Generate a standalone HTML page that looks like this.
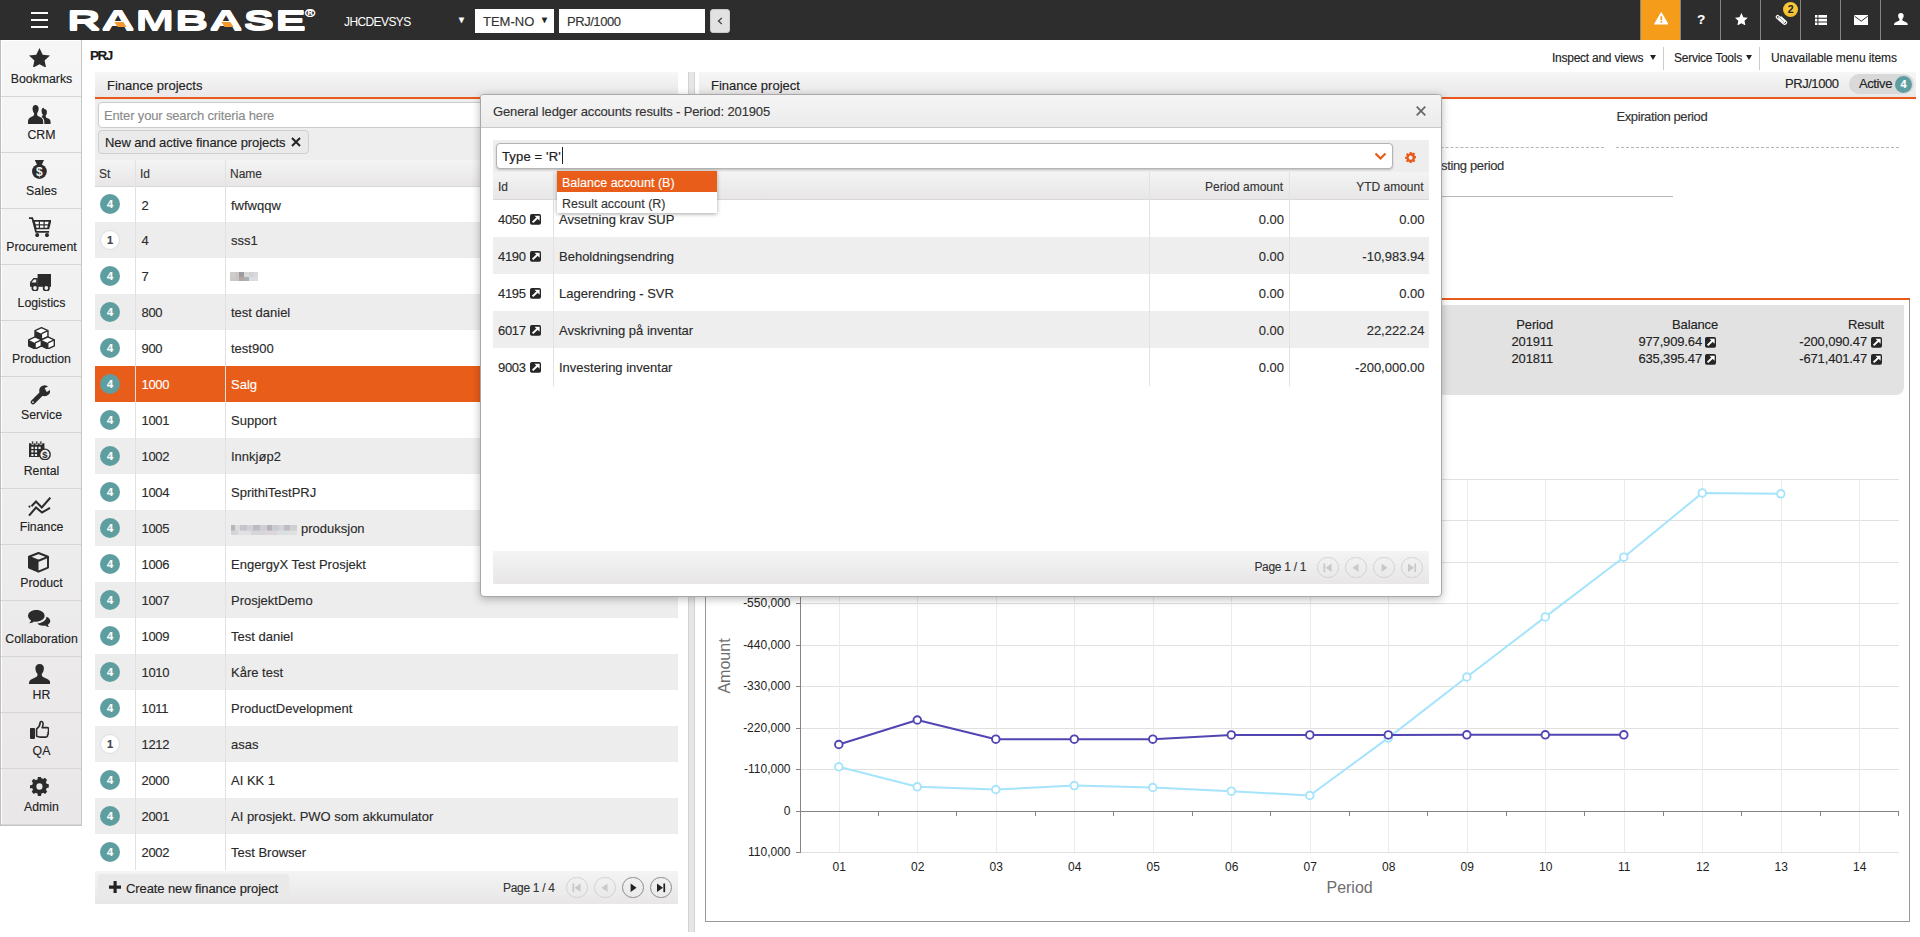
<!DOCTYPE html>
<html lang="en"><head><meta charset="utf-8"><title>RamBase - PRJ</title>
<style>
*{box-sizing:border-box;margin:0;padding:0}
html,body{width:1920px;height:937px;overflow:hidden;background:#fff}
body{font-family:"Liberation Sans",sans-serif;font-size:13px;color:#2a2a2a;position:relative;-webkit-text-stroke:.13px currentColor}
.abs{position:absolute}
svg text{-webkit-text-stroke:0}
#top{left:0;top:0;width:1920px;height:40px;background:#2d2d2d}
#top .t{position:absolute;color:#fff}
.tbtn{position:absolute;top:0;width:40px;height:40px;border-left:1px solid #8a8282}
#side{left:0;top:40px;width:82px;height:786px;background:linear-gradient(#f6f6f6,#e9e7e7);border-left:1px solid #bdbdbd;border-right:1px solid #c6c6c6;border-bottom:1px solid #c4c4c4;box-shadow:inset 1px 1px 0 #fff}
.si{position:absolute;left:0;width:80px;height:57px;border-bottom:1px solid #d6d6d6;text-align:center}
.si svg{position:absolute;left:50%;transform:translateX(-50%)}
.si span{position:absolute;left:-3px;width:87px;top:32px;font-size:12.3px;color:#222;text-align:center;line-height:14px}
.phead{position:absolute;height:27px;background:linear-gradient(#f7f7f7,#e9e7e7);border-bottom:2px solid #e8591a;font-size:13px;line-height:27px;color:#222;padding-left:12px}
.lrow{position:absolute;left:95px;width:583px;height:36px;line-height:36px}
.lrow.alt{background:#ededed}
.lrow.sel{background:#e95d1a;color:#fff}
.lrow b{position:absolute;left:5px;top:8px;width:20px;height:20px;border-radius:10px;background:#5f9ea0;color:#fff;font-size:11px;line-height:20px;text-align:center;font-weight:bold}
.lrow b.one{background:#fff;color:#444;border:1px solid #ddd;line-height:18px}
.lrow i{position:absolute;font-style:normal;top:1px}
.lrow .id{left:46.500px;letter-spacing:-.3px}
.lrow .nm{left:136px}
.vline{position:absolute;width:1px;background:#e1e1e1}
.pg{position:absolute;width:21.600px;height:21.600px;border-radius:11px;border:1px solid #8c8c8c}
.pg.dis{border-color:#d2d2d2}
.mrow{position:absolute;left:493px;width:936px;height:37px;line-height:37px}
.mrow.alt{background:#eeeeee}
.mrow i{position:absolute;font-style:normal;top:1px}
.ext{position:absolute;width:11px;height:11px;background:#222;border-radius:2px}
.ext svg{position:absolute;left:0;top:0}
</style></head><body>

<div id="top" class="abs">
<div class="abs" style="left:31px;top:12px;width:17px;height:2px;background:#fff;box-shadow:0 7px 0 #fff,0 14px 0 #fff"></div>
<div class="t" id="logo" style="left:67px;top:6px;font-size:28px;font-weight:bold;line-height:30px;letter-spacing:.5px;transform-origin:0 50%;transform:scaleX(1.655);white-space:nowrap;text-shadow:0 .8px 0 #fff,0 -.8px 0 #fff">RAMBASE</div>
<div class="t" style="left:305px;top:7.5px;font-size:11px;line-height:10px;transform-origin:0 50%;transform:scaleX(1.25);-webkit-text-stroke:.4px #fff">®</div>
<div class="abs" style="left:115.5px;top:22px;width:8.5px;height:5px;background:#f39a2e;transform:skewX(33deg)"></div>
<div class="abs" style="left:222.5px;top:22px;width:8.5px;height:5px;background:#f39a2e;transform:skewX(33deg)"></div>
<div class="t" style="left:344px;top:13.500px;font-size:12px;line-height:17px;letter-spacing:-.6px;-webkit-text-stroke:0">JHCDEVSYS</div>
<div class="t" style="left:457px;top:14px;font-size:9px;line-height:12px">▼</div>
<div class="abs" style="left:475px;top:9px;width:79px;height:24px;background:#fff"></div>
<div class="abs" style="left:483px;top:13px;font-size:13px;line-height:17px;color:#333">TEM-NO</div>
<div class="abs" style="left:540px;top:14px;font-size:9px;line-height:12px;color:#222">▼</div>
<div class="abs" style="left:559px;top:9px;width:146px;height:24px;background:#fff"></div>
<div class="abs" style="left:567px;top:13px;font-size:13px;line-height:17px;color:#333;letter-spacing:-.45px">PRJ/1000</div>
<div class="abs" style="left:710px;top:9px;width:20px;height:24px;background:#e2e2e2;border-radius:3px;border:1px solid #ccc"></div>
<svg class="abs" style="left:717px;top:17px" width="6" height="8" viewBox="0 0 6 8"><path d="M4.800 1L1.500 4l3.300 3" fill="none" stroke="#444" stroke-width="1.300"/></svg>
<div class="tbtn" style="left:1640px;background:#f59c1a"></div>
<div class="tbtn" style="left:1680px"></div>
<div class="tbtn" style="left:1720px"></div>
<div class="tbtn" style="left:1760px"></div>
<div class="tbtn" style="left:1800px"></div>
<div class="tbtn" style="left:1840px"></div>
<div class="tbtn" style="left:1880px"></div>
<svg class="abs" style="left:1653.5px;top:12px" width="14.5" height="13" viewBox="0 0 16 14"><path d="M8 .8L15.200 13H.8z" fill="#fff" stroke="#fff" stroke-width="1.200" stroke-linejoin="round"/><rect x="7.100" y="4.500" width="1.900" height="4.300" fill="#f59c1a"/><rect x="7.100" y="9.800" width="1.900" height="1.800" fill="#f59c1a"/></svg>
<div class="t" style="left:1697px;top:11px;font-size:13.5px;font-weight:bold;line-height:18px">?</div>
<svg class="abs" style="left:1735px;top:12.800px" width="12.800" height="12.500" viewBox="0.5 0.5 19 18.500" preserveAspectRatio="none"><path d="M10 .5l2.900 6.300 6.600.7-4.900 4.600 1.400 6.900L10 15.600 4 19l1.400-6.900L.5 7.500l6.600-.7z" fill="#fff"/></svg>
<svg class="abs" style="left:1775px;top:14px" width="12.500" height="11.500" viewBox="0 0 12.500 11.500"><path d="M3.300 3.600l5.200 4.500c.8.700 1.800-.4 1-1.100L3.600 1.900C2.200.7.300 2.700 1.800 4.100l6.600 5.700c1.900 1.600 4.300-1 2.500-2.700L6.200 3" fill="none" stroke="#fff" stroke-width="1.200" stroke-linecap="round" stroke-linejoin="round"/></svg>
<div class="abs" style="left:1783px;top:2px;width:15.400px;height:15.400px;border-radius:8px;background:radial-gradient(circle at 50% 35%,#fbd24a,#f2b61c);color:#222;font-size:10.500px;font-weight:bold;line-height:15px;text-align:center">2</div>
<svg class="abs" style="left:1815px;top:14.800px" width="12.400" height="10.200" viewBox="0 0 12.400 10.200"><g fill="#fff"><rect x="0" y="0" width="2.400" height="2.700"/><rect x="3.400" y="0" width="9" height="2.700"/><rect x="0" y="3.800" width="2.400" height="2.700"/><rect x="3.400" y="3.800" width="9" height="2.700"/><rect x="0" y="7.500" width="2.400" height="2.700"/><rect x="3.400" y="7.500" width="9" height="2.700"/></g></svg>
<svg class="abs" style="left:1853.800px;top:14.800px" width="14.400" height="10.200" viewBox="0 0 14.400 10.200"><rect width="14.400" height="10.200" rx=".8" fill="#fff"/><path d="M.6 1.200l6.600 5 6.600-5" fill="none" stroke="#2d2d2d" stroke-width="1"/></svg>
<svg class="abs" style="left:1894.300px;top:12.800px" width="13.800" height="12.200" viewBox="2.200 0.800 17.600 18.700" preserveAspectRatio="none"><path d="M11 .8C8.600.8 7.300 2.800 7.500 5.300c.2 2.500 1 3.800 1.700 4.800.3 2-.7 2.800-2.700 3.700-2.600 1.200-4.300 2-4.300 5.200v.5h17.600V19c0-3.200-1.700-4-4.300-5.200-2-.9-3-1.700-2.700-3.700.7-1 1.500-2.300 1.700-4.800C14.700 2.800 13.400.8 11 .8z" fill="#fff"/></svg>
</div>
<div id="side" class="abs">
<div class="si" style="top:0px"><span>Bookmarks</span></div>
<div class="si" style="top:56px"><span>CRM</span></div>
<div class="si" style="top:112px"><span>Sales</span></div>
<div class="si" style="top:168px"><span>Procurement</span></div>
<div class="si" style="top:224px"><span>Logistics</span></div>
<div class="si" style="top:280px"><span>Production</span></div>
<div class="si" style="top:336px"><span>Service</span></div>
<div class="si" style="top:392px"><span>Rental</span></div>
<div class="si" style="top:448px"><span>Finance</span></div>
<div class="si" style="top:504px"><span>Product</span></div>
<div class="si" style="top:560px"><span>Collaboration</span></div>
<div class="si" style="top:616px"><span>HR</span></div>
<div class="si" style="top:672px"><span>QA</span></div>
<div class="si" style="top:728px"><span>Admin</span></div>
</div>
<svg class="abs" style="left:29px;top:47.5px" width="21.0" height="19.8" viewBox="0.5 0.5 19 18.5" preserveAspectRatio="none"><path d="M10 .5l2.900 6.300 6.600.7-4.900 4.600 1.400 6.900L10 15.600 4 19l1.400-6.900L.5 7.500l6.600-.7z" fill="#2b2b2b"/></svg>
<svg class="abs" style="left:28px;top:104.6px" width="22.6" height="19.4" viewBox="0.6 1 20.8 17" preserveAspectRatio="none"><path d="M7.500 1C5.600 1 4.600 2.600 4.800 4.600 5 6.600 5.600 7.600 6.200 8.400 6.400 10 5.600 10.600 4 11.400 2 12.300.6 13 .6 15.500V18h14v-2.500c0-2.500-1.400-3.200-3.400-4.100-1.600-.8-2.400-1.400-2.200-3 .6-.8 1.200-1.800 1.400-3.800C10.600 2.600 9.400 1 7.500 1z" fill="#2b2b2b"/><path d="M15.3 3.500c-1.500 0-2.400 1.300-2.200 2.900.2 1.600.6 2.400 1.100 3-.1 1.200-.5 1.700-1.300 2.100 1.700.9 2.700 1.900 2.700 4V18h5.800v-2c0-2-1.100-2.600-2.700-3.300-1.300-.6-1.900-1.100-1.800-2.400.5-.6 1-1.400 1.100-3 .2-1.500-.8-2.800-2.700-2.800z" fill="#2b2b2b"/></svg>
<svg class="abs" style="left:32.2px;top:160.3px" width="14.8" height="18.9" viewBox="0 0 14.8 19" preserveAspectRatio="none"><path d="M2.800 0h9.200l-2.300 5h-4.600z" fill="#2b2b2b"/><circle cx="7.400" cy="11.600" r="7.400" fill="#2b2b2b"/><text x="7.400" y="16" font-family="Liberation Sans,sans-serif" font-size="12" font-weight="bold" fill="#f4f4f4" text-anchor="middle">$</text></svg>
<svg class="abs" style="left:28.7px;top:216.6px" width="22.5" height="20.1" viewBox="0 0 22.5 20" preserveAspectRatio="none"><path d="M0 .3h3.900l.9 2.700h17.700l-2.300 9.200H7.300l.4 1.700h12.400v1.700H6.300L2.600 2H0z" fill="#2b2b2b"/><path d="M6 4.700l.6 2.500h3.200V4.700zm5 0v2.500h3.500V4.700zm4.700 0v2.500h3.300l.6-2.500zM6.900 8.400l.6 2.300h2.300V8.400zm4.100 0v2.300h3.500V8.400zm4.700 0v2.300h2.500l.6-2.300z" fill="#fff"/><circle cx="8.200" cy="18" r="2" fill="#2b2b2b"/><circle cx="18" cy="18" r="2" fill="#2b2b2b"/></svg>
<svg class="abs" style="left:29.6px;top:273.8px" width="21.6" height="17.4" viewBox="0 0 21.6 17" preserveAspectRatio="none"><path d="M7.600 0h14v12.500h-14z" fill="#2b2b2b"/><path d="M3.400 4h4.400v8.500H0V8z" fill="#2b2b2b"/><path d="M3.900 5.300h2.300v3H1.500z" fill="#f2f1f1"/><circle cx="5" cy="13.700" r="2.700" fill="#f2f1f1" stroke="#2b2b2b" stroke-width="1.700"/><circle cx="16.300" cy="13.700" r="2.700" fill="#f2f1f1" stroke="#2b2b2b" stroke-width="1.700"/></svg>
<svg class="abs" style="left:28.4px;top:326.6px" width="27.0" height="22.6" viewBox="-0.7 -0.7 28.4 23.7" preserveAspectRatio="none"><path d="M13.50 0.00L20.30 3.15L20.30 9.45L13.50 12.60L6.70 9.45L6.70 3.15Z" fill="#fff" stroke="#2b2b2b" stroke-width="1.5" stroke-linejoin="round"/><path d="M6.70 3.15L13.50 6.30L13.50 12.60L6.70 9.45Z" fill="#2b2b2b"/><path d="M13.50 6.30L20.30 3.15M13.50 6.30L13.50 12.60" fill="none" stroke="#2b2b2b" stroke-width="1.3"/><path d="M6.80 9.70L13.60 12.85L13.60 19.15L6.80 22.30L0.00 19.15L0.00 12.85Z" fill="#fff" stroke="#2b2b2b" stroke-width="1.5" stroke-linejoin="round"/><path d="M0.00 12.85L6.80 16.00L6.80 22.30L0.00 19.15Z" fill="#2b2b2b"/><path d="M6.80 16.00L13.60 12.85M6.80 16.00L6.80 22.30" fill="none" stroke="#2b2b2b" stroke-width="1.3"/><path d="M20.20 9.70L27.00 12.85L27.00 19.15L20.20 22.30L13.40 19.15L13.40 12.85Z" fill="#fff" stroke="#2b2b2b" stroke-width="1.5" stroke-linejoin="round"/><path d="M13.40 12.85L20.20 16.00L20.20 22.30L13.40 19.15Z" fill="#2b2b2b"/><path d="M20.20 16.00L27.00 12.85M20.20 16.00L20.20 22.30" fill="none" stroke="#2b2b2b" stroke-width="1.3"/></svg>
<svg class="abs" style="left:29.6px;top:385px" width="20.7" height="19.7" viewBox="0 0 20.7 19.700" preserveAspectRatio="none"><path d="M3 17.100L12.300 7.800" stroke="#2b2b2b" stroke-width="4.500" stroke-linecap="round"/><circle cx="14.700" cy="5.700" r="5.500" fill="#2b2b2b"/><path d="M15.700 5.100L23 .9" stroke="#f0efef" stroke-width="4.300"/><circle cx="3" cy="17.100" r=".9" fill="#f0efef"/></svg>
<svg class="abs" style="left:28.7px;top:440.6px" width="21.9" height="19.4" viewBox="0 0 22 19.500" preserveAspectRatio="none"><path d="M0 2.200h15.500v7.300c-3 .6-4.800 3-4.800 6V16H0z" fill="#2b2b2b"/><path d="M2.700 0h2v3.400h-2zM6.800 0h2v3.400h-2zM10.900 0h2v3.400h-2z" fill="#2b2b2b" stroke="#efeeee" stroke-width=".7"/><path d="M2.300 5.800h2.200V8H2.300zm3.600 0h2.200V8H5.900zm3.600 0h2.200V8H9.500zM2.300 9.400h2.200v2.200H2.300zm3.600 0h2.200v2.200H5.900zM2.300 13h2.200v2H2.300zm3.600 0h2.200v2H5.900z" fill="#efeeee"/><circle cx="16" cy="13.500" r="5.300" fill="#efeeee" stroke="#2b2b2b" stroke-width="1.400"/><text x="16" y="17" font-family="Liberation Sans,sans-serif" font-size="9.500" font-weight="bold" fill="#2b2b2b" text-anchor="middle">$</text></svg>
<svg class="abs" style="left:27.8px;top:497px" width="23.4" height="19.4" viewBox="0 0 23.400 19.400" preserveAspectRatio="none"><path d="M3.500 9.200L8 4.500l5.800 6L22.300.7" fill="none" stroke="#2b2b2b" stroke-width="2"/><circle cx="1.500" cy="9.600" r="1.100" fill="#2b2b2b"/><path d="M1 18.700L8 10.500l6 5 8-4.500" fill="none" stroke="#2b2b2b" stroke-width="2"/></svg>
<svg class="abs" style="left:28.4px;top:552px" width="21.0" height="20.7" viewBox="0 0 21 20.700" preserveAspectRatio="none"><path d="M10.500 1L20 4.800v10.800l-9.500 4.100L1 15.600V4.800z" fill="#edecec" stroke="#2b2b2b" stroke-width="2" stroke-linejoin="round"/><path d="M10.500 8.800v10.900L1 15.600V4.800z" fill="#2b2b2b"/><path d="M1 4.800l9.500 4 9.500-4" fill="none" stroke="#2b2b2b" stroke-width="2" stroke-linejoin="round"/></svg>
<svg class="abs" style="left:28.4px;top:610.4px" width="22.8" height="17.1" viewBox="0.8 1 22.500 18.200" preserveAspectRatio="none"><path d="M9 1C4.300 1 .8 3.700.8 7.200c0 2 1.200 3.700 3 4.800-.2 1.200-.9 2.300-1.800 3.100 1.900-.1 3.600-.8 4.800-1.900.7.100 1.400.2 2.200.2 4.700 0 8.200-2.800 8.200-6.200S13.700 1 9 1z" fill="#2b2b2b"/><path d="M19 8.300c0 3.700-3.800 6.800-9 7.100 1.300 1.500 3.500 2.400 6 2.400.6 0 1.200-.1 1.800-.2 1 .9 2.400 1.500 4 1.600-.8-.7-1.300-1.600-1.500-2.600 1.500-.9 2.500-2.300 2.500-3.900 0-1.800-1.500-3.500-3.800-4.400z" fill="#2b2b2b"/></svg>
<svg class="abs" style="left:28.7px;top:664px" width="21.3" height="20.0" viewBox="2.2 0.8 17.600 18.700" preserveAspectRatio="none"><path d="M11 .8C8.600.8 7.300 2.800 7.500 5.300c.2 2.500 1 3.800 1.700 4.800.3 2-.7 2.800-2.700 3.700-2.600 1.200-4.300 2-4.300 5.200v.5h17.600V19c0-3.200-1.700-4-4.300-5.200-2-.9-3-1.700-2.700-3.700.7-1 1.500-2.300 1.700-4.800C14.700 2.800 13.400.8 11 .8z" fill="#2b2b2b"/></svg>
<svg class="abs" style="left:29.6px;top:719.5px" width="19.8" height="20.9" viewBox="0 0 19.800 21" preserveAspectRatio="none"><path d="M6.600 9c2-1.300 3.400-3.600 3.600-6.600.1-1.400 2.700-1.300 2.900 1.200.1 1.400-.4 2.800-.9 4.100h5c1.500 0 2 1.500 1.100 2.400.8.800.6 1.900-.3 2.500.6.900.3 1.900-.6 2.400.5 1.100-.2 2.200-1.500 2.200h-5.400c-1.400 0-2.800-.7-3.900-1z" fill="#ebe9e9" stroke="#2b2b2b" stroke-width="1.600" stroke-linejoin="round"/><path d="M.8 8.800h3.400v9.400H.8z" fill="#2b2b2b" stroke="#2b2b2b" stroke-width="1.600" stroke-linejoin="round"/></svg>
<svg class="abs" style="left:30px;top:777px" width="18.8" height="19.0" viewBox="-1.500 .6 20.900 20" preserveAspectRatio="none"><path d="M19.4 11.7V8.3l-2.5-.5c-.2-.7-.5-1.300-.8-1.900l1.400-2.100-2.400-2.400-2.100 1.400c-.6-.3-1.200-.6-1.900-.8L10.700.6H7.300l-.5 2.500c-.7.2-1.300.5-1.900.8L2.800 2.500.4 4.900 1.800 7c-.3.600-.6 1.200-.8 1.900l-2.500.5v3.400L1 12.200c.2.700.5 1.300.8 1.900L.4 16.200l2.400 2.400 2.100-1.400c.6.3 1.200.6 1.900.8l.5 2.500h3.400l.5-2.500c.7-.2 1.300-.5 1.900-.8l2.100 1.400 2.400-2.400-1.400-2.100c.3-.6.600-1.200.8-1.900z" fill="#2b2b2b"/><circle cx="9" cy="10.600" r="3.400" fill="#eae8e8"/></svg>
<div class="abs" style="left:90px;top:46.5px;font-size:13.5px;font-weight:bold;line-height:18px;color:#1a1a1a;letter-spacing:-1.5px">PRJ</div>
<div class="abs" style="left:1552px;top:51px;font-size:12px;line-height:15px;color:#222;white-space:nowrap;letter-spacing:-.25px">Inspect and views</div>
<div class="abs" style="left:1649.500px;top:55px;width:0;height:0;border-left:3.700px solid transparent;border-right:3.700px solid transparent;border-top:5.500px solid #222"></div>
<div class="abs" style="left:1663px;top:47px;width:1px;height:23px;background:#ccc"></div>
<div class="abs" style="left:1674px;top:51px;font-size:12px;line-height:15px;color:#222;white-space:nowrap;letter-spacing:-.25px">Service Tools</div>
<div class="abs" style="left:1746px;top:55px;width:0;height:0;border-left:3.700px solid transparent;border-right:3.700px solid transparent;border-top:5.500px solid #222"></div>
<div class="abs" style="left:1759px;top:47px;width:1px;height:23px;background:#ccc"></div>
<div class="abs" style="left:1771px;top:51px;font-size:12px;line-height:15px;color:#222;white-space:nowrap;letter-spacing:-.1px">Unavailable menu items</div>
<div class="phead" style="left:95px;top:72px;width:583px">Finance projects</div>
<div class="abs" style="left:95px;top:99px;width:583px;height:61px;background:#eeeeee"></div>
<div class="abs" style="left:98px;top:102px;width:577px;height:26px;background:#fff;border:1px solid #ccc;border-radius:4px;padding-left:5px;line-height:26px;color:#8a8a8a;letter-spacing:-.15px">Enter your search criteria here</div>
<div class="abs" style="left:98px;top:130px;width:211px;height:24px;background:#eaeaea;border:1px solid #cfcfcf;border-radius:4px;padding-left:6px;line-height:24px;color:#222;letter-spacing:-.1px;white-space:nowrap">New and active finance projects</div>
<svg class="abs" style="left:291px;top:137px" width="10" height="10" viewBox="0 0 10 10"><path d="M1 1l8 8M9 1l-8 8" stroke="#222" stroke-width="2"/></svg>
<div class="abs" style="left:95px;top:160px;width:583px;height:27px;background:linear-gradient(#f4f4f4,#e8e6e6);border-bottom:1px solid #d8d8d8"></div>
<div class="abs" style="left:99px;top:167px;font-size:12px;line-height:15px;color:#333">St</div>
<div class="abs" style="left:140px;top:167px;font-size:12px;line-height:15px;color:#333">Id</div>
<div class="abs" style="left:230px;top:167px;font-size:12px;line-height:15px;color:#333">Name</div>
<div class="lrow" style="top:187px;height:35px"><b style="top:7px">4</b><i class="id">2</i><i class="nm">fwfwqqw</i></div>
<div class="lrow alt" style="top:222px;height:36px"><b class="one">1</b><i class="id">4</i><i class="nm">sss1</i></div>
<div class="lrow" style="top:258px;height:36px"><b>4</b><i class="id">7</i><i class="nm" style="left:135px;top:14px;width:28px;height:9px;background:linear-gradient(90deg,#d0cccc 0 17%,#cbc7c7 17% 33%,#9b9ba1 33% 50%,#dbd9d5 50% 67%,#d2d2d8 67% 84%,#d9d9d9 84%) top/100% 56% no-repeat,linear-gradient(90deg,#cdc9c9 0 17%,#c9c5c1 17% 33%,#b1a5a5 33% 50%,#abafb1 50% 67%,#d5dde5 67% 84%,#dddddb 84%) bottom/100% 50% no-repeat"></i></div>
<div class="lrow alt" style="top:294px;height:36px"><b>4</b><i class="id">800</i><i class="nm">test daniel</i></div>
<div class="lrow" style="top:330px;height:36px"><b>4</b><i class="id">900</i><i class="nm">test900</i></div>
<div class="lrow sel" style="top:366px;height:36px"><b>4</b><i class="id">1000</i><i class="nm">Salg</i></div>
<div class="lrow" style="top:402px;height:36px"><b>4</b><i class="id">1001</i><i class="nm">Support</i></div>
<div class="lrow alt" style="top:438px;height:36px"><b>4</b><i class="id">1002</i><i class="nm">Innkjøp2</i></div>
<div class="lrow" style="top:474px;height:36px"><b>4</b><i class="id">1004</i><i class="nm">SprithiTestPRJ</i></div>
<div class="lrow alt" style="top:510px;height:36px"><b>4</b><i class="id">1005</i><i class="nm" style="top:15px;width:66px;height:10px;background:linear-gradient(90deg,#b9b5bb 0 6%,#dcdcde 6% 14%,#c4c4ca 14% 24%,#d2d0d4 24% 34%,#bcbcc4 34% 44%,#cfcfd3 44% 54%,#b8b0bc 54% 62%,#c6ccd2 62% 72%,#d4d4d8 72% 80%,#bdbdc3 80% 90%,#d0d0d4 90%) top/100% 56% no-repeat,linear-gradient(90deg,#d6d4d6 0 10%,#e2e0e2 10% 30%,#d6d6da 30% 50%,#dcd6dc 50% 70%,#dadfe3 70% 85%,#e0e0e0 85%) bottom/100% 50% no-repeat"></i><i class="nm" style="left:206px">produksjon</i></div>
<div class="lrow" style="top:546px;height:36px"><b>4</b><i class="id">1006</i><i class="nm">EngergyX Test Prosjekt</i></div>
<div class="lrow alt" style="top:582px;height:36px"><b>4</b><i class="id">1007</i><i class="nm">ProsjektDemo</i></div>
<div class="lrow" style="top:618px;height:36px"><b>4</b><i class="id">1009</i><i class="nm">Test daniel</i></div>
<div class="lrow alt" style="top:654px;height:36px"><b>4</b><i class="id">1010</i><i class="nm">Kåre test</i></div>
<div class="lrow" style="top:690px;height:36px"><b>4</b><i class="id">1011</i><i class="nm">ProductDevelopment</i></div>
<div class="lrow alt" style="top:726px;height:36px"><b class="one">1</b><i class="id">1212</i><i class="nm">asas</i></div>
<div class="lrow" style="top:762px;height:36px"><b>4</b><i class="id">2000</i><i class="nm">AI KK 1</i></div>
<div class="lrow alt" style="top:798px;height:36px"><b>4</b><i class="id">2001</i><i class="nm">AI prosjekt. PWO som akkumulator</i></div>
<div class="lrow" style="top:834px;height:36px"><b>4</b><i class="id">2002</i><i class="nm">Test Browser</i></div>
<div class="vline" style="left:135px;top:160px;height:710px"></div>
<div class="vline" style="left:225px;top:160px;height:710px"></div>
<div class="abs" style="left:95px;top:871px;width:583px;height:33px;background:linear-gradient(#f4f4f4,#e8e6e6)"></div>
<div class="abs" style="left:98px;top:874px;width:191px;height:27px;background:#e9e9e9;border-radius:3px"></div>
<svg class="abs" style="left:108.800px;top:881.300px" width="12.200" height="12.200" viewBox="0 0 12 12"><path d="M6 0v12M0 6h12" stroke="#222" stroke-width="3.100"/></svg>
<div class="abs" style="left:126px;top:881px;line-height:16px;color:#222;letter-spacing:-.1px;white-space:nowrap">Create new finance project</div>
<div class="abs" style="left:503px;top:880.500px;font-size:12px;line-height:15px;color:#333;white-space:nowrap;letter-spacing:-.3px">Page 1 / 4</div>
<div class="pg dis" style="left:566.2px;top:876.8px"></div>
<svg class="abs" style="left:566.2px;top:876.8px" width="21.600" height="21.600" viewBox="0 0 20 20"><rect x="6" y="6" width="1.6" height="8" fill="#c9c9c9"/><path d="M13.5 6v8L8 10z" fill="#c9c9c9"/></svg>
<div class="pg dis" style="left:594.2px;top:876.8px"></div>
<svg class="abs" style="left:594.2px;top:876.8px" width="21.600" height="21.600" viewBox="0 0 20 20"><path d="M12.5 6v8L7 10z" fill="#c9c9c9"/></svg>
<div class="pg" style="left:622.2px;top:876.8px"></div>
<svg class="abs" style="left:622.2px;top:876.8px" width="21.600" height="21.600" viewBox="0 0 20 20"><path d="M8 6v8l5.5-4z" fill="#222"/></svg>
<div class="pg" style="left:650.2px;top:876.8px"></div>
<svg class="abs" style="left:650.2px;top:876.8px" width="21.600" height="21.600" viewBox="0 0 20 20"><rect x="12.4" y="6" width="1.6" height="8" fill="#222"/><path d="M6.5 6v8L12 10z" fill="#222"/></svg>
<div class="abs" style="left:688px;top:72px;width:7px;height:860px;background:#e6e6e6;border-left:1px solid #d2d2d2;border-right:1px solid #d2d2d2"></div>
<div class="phead" style="left:699px;top:72px;width:1217px">Finance project</div>
<div class="abs" style="left:1785px;top:76px;line-height:16px;color:#222;letter-spacing:-.45px">PRJ/1000</div>
<div class="abs" style="left:1849px;top:74px;width:65px;height:20px;border-radius:10px;background:#d9d9d9"></div>
<div class="abs" style="left:1859px;top:76px;line-height:16px;color:#222;letter-spacing:-.4px">Active</div>
<div class="abs" style="left:1895px;top:76px;width:17px;height:17px;border-radius:9px;background:#5f9ea0;color:#fff;font-size:11px;font-weight:bold;line-height:17px;text-align:center">4</div>
<div class="abs" style="left:1616.500px;top:109px;line-height:16px;color:#333;letter-spacing:-.4px;white-space:nowrap">Expiration period</div>
<div class="abs" style="left:1300px;top:147px;width:304px;height:0;border-top:1px dashed #b5b5b5"></div>
<div class="abs" style="left:1616px;top:147px;width:283px;height:0;border-top:1px dashed #b5b5b5"></div>
<div class="abs" style="left:1400px;top:158px;width:104px;text-align:right;line-height:15px;color:#333;letter-spacing:-.35px;white-space:nowrap">Posting period</div>
<div class="abs" style="left:1300px;top:196px;width:373px;height:1px;background:#b9b9b9"></div>
<div class="abs" style="left:706px;top:298px;width:1204px;height:2px;background:#e8591a"></div>
<div class="abs" style="left:705px;top:300px;width:1205px;height:622px;border:1px solid #999;border-top:none"></div>
<div class="abs" style="left:712px;top:305px;width:1192px;height:90px;background:#e2e2e2;border-radius:0 0 8px 8px"></div>
<div class="abs" style="left:1433px;top:317px;width:120px;text-align:right;line-height:16px;color:#222;letter-spacing:-.15px;white-space:nowrap">Period</div>
<div class="abs" style="left:1433px;top:334px;width:120px;text-align:right;line-height:16px;color:#222;letter-spacing:-.15px;white-space:nowrap">201911</div>
<div class="abs" style="left:1433px;top:351px;width:120px;text-align:right;line-height:16px;color:#222;letter-spacing:-.15px;white-space:nowrap">201811</div>
<div class="abs" style="left:1598px;top:317px;width:120px;text-align:right;line-height:16px;color:#222;letter-spacing:-.15px;white-space:nowrap">Balance</div>
<div class="abs" style="left:1582px;top:334px;width:120px;text-align:right;line-height:16px;color:#222;letter-spacing:-.15px;white-space:nowrap">977,909.64</div>
<div class="abs" style="left:1582px;top:351px;width:120px;text-align:right;line-height:16px;color:#222;letter-spacing:-.15px;white-space:nowrap">635,395.47</div>
<div class="abs" style="left:1764px;top:317px;width:120px;text-align:right;line-height:16px;color:#222;letter-spacing:-.15px;white-space:nowrap">Result</div>
<div class="abs" style="left:1747px;top:334px;width:120px;text-align:right;line-height:16px;color:#222;letter-spacing:-.15px;white-space:nowrap">-200,090.47</div>
<div class="abs" style="left:1747px;top:351px;width:120px;text-align:right;line-height:16px;color:#222;letter-spacing:-.15px;white-space:nowrap">-671,401.47</div>
<svg class="abs" style="left:1705px;top:337px" width="11" height="11" viewBox="0 0 11 11"><rect width="11" height="10.8" rx="1.8" fill="#262626"/><path d="M4.500 1.800H9.600V6.800Z" fill="#fff"/><path d="M2.600 8.400L7.400 3.800" stroke="#fff" stroke-width="2"/></svg>
<svg class="abs" style="left:1705px;top:354px" width="11" height="11" viewBox="0 0 11 11"><rect width="11" height="10.8" rx="1.8" fill="#262626"/><path d="M4.500 1.800H9.600V6.800Z" fill="#fff"/><path d="M2.600 8.400L7.400 3.800" stroke="#fff" stroke-width="2"/></svg>
<svg class="abs" style="left:1871px;top:337px" width="11" height="11" viewBox="0 0 11 11"><rect width="11" height="10.8" rx="1.8" fill="#262626"/><path d="M4.500 1.800H9.600V6.800Z" fill="#fff"/><path d="M2.600 8.400L7.400 3.800" stroke="#fff" stroke-width="2"/></svg>
<svg class="abs" style="left:1871px;top:354px" width="11" height="11" viewBox="0 0 11 11"><rect width="11" height="10.8" rx="1.8" fill="#262626"/><path d="M4.500 1.800H9.600V6.800Z" fill="#fff"/><path d="M2.600 8.400L7.400 3.800" stroke="#fff" stroke-width="2"/></svg>
<svg class="abs" style="left:0;top:0" width="1920" height="937" viewBox="0 0 1920 937" font-family="Liberation Sans,sans-serif">
<path d="M801 479.5H1899" stroke="#e0e0e0" stroke-width="1"/>
<path d="M801 520.5H1899" stroke="#e0e0e0" stroke-width="1"/>
<path d="M801 562.5H1899" stroke="#e0e0e0" stroke-width="1"/>
<path d="M801 603.5H1899" stroke="#e0e0e0" stroke-width="1"/>
<path d="M801 645.5H1899" stroke="#e0e0e0" stroke-width="1"/>
<path d="M801 686.5H1899" stroke="#e0e0e0" stroke-width="1"/>
<path d="M801 728.5H1899" stroke="#e0e0e0" stroke-width="1"/>
<path d="M801 769.5H1899" stroke="#e0e0e0" stroke-width="1"/>
<path d="M801 852.5H1899" stroke="#e0e0e0" stroke-width="1"/>
<path d="M839.5 480V852" stroke="#ebebeb" stroke-width="1"/>
<path d="M917.5 480V852" stroke="#ebebeb" stroke-width="1"/>
<path d="M996.5 480V852" stroke="#ebebeb" stroke-width="1"/>
<path d="M1074.5 480V852" stroke="#ebebeb" stroke-width="1"/>
<path d="M1153.5 480V852" stroke="#ebebeb" stroke-width="1"/>
<path d="M1231.5 480V852" stroke="#ebebeb" stroke-width="1"/>
<path d="M1310.5 480V852" stroke="#ebebeb" stroke-width="1"/>
<path d="M1388.5 480V852" stroke="#ebebeb" stroke-width="1"/>
<path d="M1467.5 480V852" stroke="#ebebeb" stroke-width="1"/>
<path d="M1545.5 480V852" stroke="#ebebeb" stroke-width="1"/>
<path d="M1624.5 480V852" stroke="#ebebeb" stroke-width="1"/>
<path d="M1702.5 480V852" stroke="#ebebeb" stroke-width="1"/>
<path d="M1781.5 480V852" stroke="#ebebeb" stroke-width="1"/>
<path d="M1859.5 480V852" stroke="#ebebeb" stroke-width="1"/>
<path d="M800.5 479V853" stroke="#858585" stroke-width="1"/>
<path d="M800 811.5H1899" stroke="#858585" stroke-width="1"/>
<path d="M878.5 811V816" stroke="#858585" stroke-width="1"/>
<path d="M956.5 811V816" stroke="#858585" stroke-width="1"/>
<path d="M1035.5 811V816" stroke="#858585" stroke-width="1"/>
<path d="M1113.5 811V816" stroke="#858585" stroke-width="1"/>
<path d="M1192.5 811V816" stroke="#858585" stroke-width="1"/>
<path d="M1270.5 811V816" stroke="#858585" stroke-width="1"/>
<path d="M1349.5 811V816" stroke="#858585" stroke-width="1"/>
<path d="M1427.5 811V816" stroke="#858585" stroke-width="1"/>
<path d="M1506.5 811V816" stroke="#858585" stroke-width="1"/>
<path d="M1584.5 811V816" stroke="#858585" stroke-width="1"/>
<path d="M1663.5 811V816" stroke="#858585" stroke-width="1"/>
<path d="M1741.5 811V816" stroke="#858585" stroke-width="1"/>
<path d="M1820.5 811V816" stroke="#858585" stroke-width="1"/>
<path d="M1898.5 811V816" stroke="#858585" stroke-width="1"/>
<path d="M796 603.5H800" stroke="#858585" stroke-width="1"/>
<path d="M796 645.5H800" stroke="#858585" stroke-width="1"/>
<path d="M796 686.5H800" stroke="#858585" stroke-width="1"/>
<path d="M796 728.5H800" stroke="#858585" stroke-width="1"/>
<path d="M796 769.5H800" stroke="#858585" stroke-width="1"/>
<path d="M796 811.5H800" stroke="#858585" stroke-width="1"/>
<path d="M796 852.5H800" stroke="#858585" stroke-width="1"/>
<text x="790.500" y="606.9" font-size="12" fill="#222" text-anchor="end">-550,000</text>
<text x="790.500" y="648.9" font-size="12" fill="#222" text-anchor="end">-440,000</text>
<text x="790.500" y="689.9" font-size="12" fill="#222" text-anchor="end">-330,000</text>
<text x="790.500" y="731.9" font-size="12" fill="#222" text-anchor="end">-220,000</text>
<text x="790.500" y="772.9" font-size="12" fill="#222" text-anchor="end">-110,000</text>
<text x="790.500" y="814.9" font-size="12" fill="#222" text-anchor="end">0</text>
<text x="790.500" y="855.9" font-size="12" fill="#222" text-anchor="end">110,000</text>
<text x="839.3" y="871" font-size="12" fill="#222" text-anchor="middle">01</text>
<text x="917.8" y="871" font-size="12" fill="#222" text-anchor="middle">02</text>
<text x="996.3" y="871" font-size="12" fill="#222" text-anchor="middle">03</text>
<text x="1074.8" y="871" font-size="12" fill="#222" text-anchor="middle">04</text>
<text x="1153.3" y="871" font-size="12" fill="#222" text-anchor="middle">05</text>
<text x="1231.8" y="871" font-size="12" fill="#222" text-anchor="middle">06</text>
<text x="1310.3" y="871" font-size="12" fill="#222" text-anchor="middle">07</text>
<text x="1388.8" y="871" font-size="12" fill="#222" text-anchor="middle">08</text>
<text x="1467.3" y="871" font-size="12" fill="#222" text-anchor="middle">09</text>
<text x="1545.8" y="871" font-size="12" fill="#222" text-anchor="middle">10</text>
<text x="1624.3" y="871" font-size="12" fill="#222" text-anchor="middle">11</text>
<text x="1702.8" y="871" font-size="12" fill="#222" text-anchor="middle">12</text>
<text x="1781.3" y="871" font-size="12" fill="#222" text-anchor="middle">13</text>
<text x="1859.8" y="871" font-size="12" fill="#222" text-anchor="middle">14</text>
<text x="1349.600" y="892.500" font-size="16" fill="#6e6e6e" text-anchor="middle">Period</text>
<text transform="translate(729.800,666) rotate(-90)" font-size="16" fill="#6e6e6e" text-anchor="middle">Amount</text>
<path d="M838.8 766.8 L917.3 786.8 L995.8 789.5 L1074.3 785.6 L1152.8 787.5 L1231.3 791.2 L1309.8 795.5 L1388.3 737.9 L1466.8 677 L1545.3 616.9 L1623.8 557.2 L1702.3 492.9 L1780.8 493.8" fill="none" stroke="#a5e4fb" stroke-width="2" stroke-linejoin="round"/>
<circle cx="838.8" cy="766.8" r="3.800" fill="#fff" stroke="#a5e4fb" stroke-width="1.900"/>
<circle cx="917.3" cy="786.8" r="3.800" fill="#fff" stroke="#a5e4fb" stroke-width="1.900"/>
<circle cx="995.8" cy="789.5" r="3.800" fill="#fff" stroke="#a5e4fb" stroke-width="1.900"/>
<circle cx="1074.3" cy="785.6" r="3.800" fill="#fff" stroke="#a5e4fb" stroke-width="1.900"/>
<circle cx="1152.8" cy="787.5" r="3.800" fill="#fff" stroke="#a5e4fb" stroke-width="1.900"/>
<circle cx="1231.3" cy="791.2" r="3.800" fill="#fff" stroke="#a5e4fb" stroke-width="1.900"/>
<circle cx="1309.8" cy="795.5" r="3.800" fill="#fff" stroke="#a5e4fb" stroke-width="1.900"/>
<circle cx="1388.3" cy="737.9" r="3.800" fill="#fff" stroke="#a5e4fb" stroke-width="1.900"/>
<circle cx="1466.8" cy="677" r="3.800" fill="#fff" stroke="#a5e4fb" stroke-width="1.900"/>
<circle cx="1545.3" cy="616.9" r="3.800" fill="#fff" stroke="#a5e4fb" stroke-width="1.900"/>
<circle cx="1623.8" cy="557.2" r="3.800" fill="#fff" stroke="#a5e4fb" stroke-width="1.900"/>
<circle cx="1702.3" cy="492.9" r="3.800" fill="#fff" stroke="#a5e4fb" stroke-width="1.900"/>
<circle cx="1780.8" cy="493.8" r="3.800" fill="#fff" stroke="#a5e4fb" stroke-width="1.900"/>
<path d="M838.8 744.5 L917.3 720 L995.8 739.2 L1074.3 739.2 L1152.8 739.2 L1231.3 734.9 L1309.8 734.9 L1388.3 734.9 L1466.8 734.8 L1545.3 734.8 L1623.8 734.8" fill="none" stroke="#5145b3" stroke-width="2" stroke-linejoin="round"/>
<circle cx="838.8" cy="744.5" r="3.800" fill="#fff" stroke="#5145b3" stroke-width="1.900"/>
<circle cx="917.3" cy="720" r="3.800" fill="#fff" stroke="#5145b3" stroke-width="1.900"/>
<circle cx="995.8" cy="739.2" r="3.800" fill="#fff" stroke="#5145b3" stroke-width="1.900"/>
<circle cx="1074.3" cy="739.2" r="3.800" fill="#fff" stroke="#5145b3" stroke-width="1.900"/>
<circle cx="1152.8" cy="739.2" r="3.800" fill="#fff" stroke="#5145b3" stroke-width="1.900"/>
<circle cx="1231.3" cy="734.9" r="3.800" fill="#fff" stroke="#5145b3" stroke-width="1.900"/>
<circle cx="1309.8" cy="734.9" r="3.800" fill="#fff" stroke="#5145b3" stroke-width="1.900"/>
<circle cx="1388.3" cy="734.9" r="3.800" fill="#fff" stroke="#5145b3" stroke-width="1.900"/>
<circle cx="1466.8" cy="734.8" r="3.800" fill="#fff" stroke="#5145b3" stroke-width="1.900"/>
<circle cx="1545.3" cy="734.8" r="3.800" fill="#fff" stroke="#5145b3" stroke-width="1.900"/>
<circle cx="1623.8" cy="734.8" r="3.800" fill="#fff" stroke="#5145b3" stroke-width="1.900"/>
</svg>
<div class="abs" style="left:480px;top:94px;width:962px;height:503px;background:#fff;border:1px solid #a8a8a8;border-radius:4px;box-shadow:0 2px 9px rgba(0,0,0,.28)"></div>
<div class="abs" style="left:481px;top:95px;width:960px;height:33px;background:linear-gradient(#f5f5f5,#ebebeb);border-bottom:1px solid #c9c9c9;border-radius:3px 3px 0 0"></div>
<div class="abs" style="left:493px;top:104px;line-height:16px;color:#333;letter-spacing:-.13px;white-space:nowrap">General ledger accounts results - Period: 201905</div>
<svg class="abs" style="left:1415.500px;top:106px" width="10" height="10" viewBox="0 0 10 10"><path d="M.7.700l8.600 8.600M9.300.7L.7 9.300" stroke="#666" stroke-width="1.700"/></svg>
<div class="abs" style="left:493px;top:140px;width:936px;height:32px;background:#eeeeee"></div>
<div class="abs" style="left:496px;top:143px;width:897px;height:25.500px;background:#fff;border:1px solid #b4b4b4;border-radius:4px;box-shadow:0 1px 2px rgba(0,0,0,.2)"></div>
<div class="abs" style="left:502px;top:149px;line-height:16px;color:#222;white-space:nowrap;letter-spacing:.15px;-webkit-text-stroke:.2px #222">Type = 'R'</div>
<div class="abs" style="left:561.500px;top:147px;width:1px;height:17px;background:#222"></div>
<svg class="abs" style="left:1374px;top:152px" width="13" height="9" viewBox="0 0 13 9"><path d="M1.5 1.5l5 5 5-5" fill="none" stroke="#e8591a" stroke-width="2.2"/></svg>
<svg class="abs" style="left:1404.600px;top:151.600px" width="11.200" height="11.400" viewBox="-1.500 .6 20.900 20" preserveAspectRatio="none"><path fill-rule="evenodd" d="M19.4 11.7V8.3l-2.5-.5c-.2-.7-.5-1.300-.8-1.900l1.400-2.100-2.400-2.400-2.100 1.400c-.6-.3-1.200-.6-1.900-.8L10.700.6H7.300l-.5 2.500c-.7.2-1.300.5-1.900.8L2.800 2.500.4 4.900 1.800 7c-.3.600-.6 1.200-.8 1.900l-2.500.5v3.400L1 12.200c.2.700.5 1.300.8 1.900L.4 16.200l2.400 2.400 2.100-1.400c.6.3 1.200.6 1.900.8l.5 2.500h3.400l.5-2.500c.7-.2 1.300-.5 1.900-.8l2.100 1.400 2.400-2.400-1.400-2.100c.3-.6.600-1.200.8-1.900zM9 6.900a3.700 3.700 0 1 0 .01 0z" fill="#e8591a"/></svg>
<div class="abs" style="left:493px;top:172px;width:936px;height:28px;background:linear-gradient(#f4f4f4,#e8e6e6);border-bottom:1px solid #d8d8d8"></div>
<div class="abs" style="left:498px;top:180px;font-size:12px;line-height:15px;color:#333">Id</div>
<div class="abs" style="left:1163px;top:180px;width:120px;text-align:right;font-size:12px;line-height:15px;color:#333;white-space:nowrap">Period amount</div>
<div class="abs" style="left:1303.500px;top:180px;width:120px;text-align:right;font-size:12px;line-height:15px;color:#333;white-space:nowrap">YTD amount</div>
<div class="mrow" style="top:200px"><i style="left:5px;letter-spacing:-.3px">4050</i><i style="left:66px">Avsetning krav SUP</i><i style="left:671px;width:120px;text-align:right">0.00</i><i style="left:811.500px;width:120px;text-align:right">0.00</i></div>
<svg class="abs" style="left:529.5px;top:214px" width="11" height="11" viewBox="0 0 11 11"><rect width="11" height="10.8" rx="1.8" fill="#262626"/><path d="M4.500 1.800H9.600V6.800Z" fill="#fff"/><path d="M2.600 8.400L7.400 3.800" stroke="#fff" stroke-width="2"/></svg>
<div class="mrow alt" style="top:237px"><i style="left:5px;letter-spacing:-.3px">4190</i><i style="left:66px">Beholdningsendring</i><i style="left:671px;width:120px;text-align:right">0.00</i><i style="left:811.500px;width:120px;text-align:right">-10,983.94</i></div>
<svg class="abs" style="left:529.5px;top:251px" width="11" height="11" viewBox="0 0 11 11"><rect width="11" height="10.8" rx="1.8" fill="#262626"/><path d="M4.500 1.800H9.600V6.800Z" fill="#fff"/><path d="M2.600 8.400L7.400 3.800" stroke="#fff" stroke-width="2"/></svg>
<div class="mrow" style="top:274px"><i style="left:5px;letter-spacing:-.3px">4195</i><i style="left:66px">Lagerendring - SVR</i><i style="left:671px;width:120px;text-align:right">0.00</i><i style="left:811.500px;width:120px;text-align:right">0.00</i></div>
<svg class="abs" style="left:529.5px;top:288px" width="11" height="11" viewBox="0 0 11 11"><rect width="11" height="10.8" rx="1.8" fill="#262626"/><path d="M4.500 1.800H9.600V6.800Z" fill="#fff"/><path d="M2.600 8.400L7.400 3.800" stroke="#fff" stroke-width="2"/></svg>
<div class="mrow alt" style="top:311px"><i style="left:5px;letter-spacing:-.3px">6017</i><i style="left:66px">Avskrivning på inventar</i><i style="left:671px;width:120px;text-align:right">0.00</i><i style="left:811.500px;width:120px;text-align:right">22,222.24</i></div>
<svg class="abs" style="left:529.5px;top:325px" width="11" height="11" viewBox="0 0 11 11"><rect width="11" height="10.8" rx="1.8" fill="#262626"/><path d="M4.500 1.800H9.600V6.800Z" fill="#fff"/><path d="M2.600 8.400L7.400 3.800" stroke="#fff" stroke-width="2"/></svg>
<div class="mrow" style="top:348px"><i style="left:5px;letter-spacing:-.3px">9003</i><i style="left:66px">Investering inventar</i><i style="left:671px;width:120px;text-align:right">0.00</i><i style="left:811.500px;width:120px;text-align:right">-200,000.00</i></div>
<svg class="abs" style="left:529.5px;top:362px" width="11" height="11" viewBox="0 0 11 11"><rect width="11" height="10.8" rx="1.8" fill="#262626"/><path d="M4.500 1.800H9.600V6.800Z" fill="#fff"/><path d="M2.600 8.400L7.400 3.800" stroke="#fff" stroke-width="2"/></svg>
<div class="vline" style="left:553px;top:172px;height:214px;background:#e2e2e2"></div>
<div class="vline" style="left:1149px;top:172px;height:214px;background:#e2e2e2"></div>
<div class="vline" style="left:1289px;top:172px;height:214px;background:#e2e2e2"></div>
<div class="abs" style="left:493px;top:551px;width:936px;height:33px;background:linear-gradient(#f4f4f4,#e8e6e6)"></div>
<div class="abs" style="left:1254.400px;top:560px;font-size:12px;line-height:15px;color:#333;white-space:nowrap;letter-spacing:-.3px">Page 1 / 1</div>
<div class="pg dis" style="left:1317.3px;top:556.6px"></div>
<svg class="abs" style="left:1317.3px;top:556.6px" width="21.600" height="21.600" viewBox="0 0 20 20"><rect x="6" y="6" width="1.6" height="8" fill="#c9c9c9"/><path d="M13.5 6v8L8 10z" fill="#c9c9c9"/></svg>
<div class="pg dis" style="left:1345.3px;top:556.6px"></div>
<svg class="abs" style="left:1345.3px;top:556.6px" width="21.600" height="21.600" viewBox="0 0 20 20"><path d="M12.5 6v8L7 10z" fill="#c9c9c9"/></svg>
<div class="pg dis" style="left:1373.3px;top:556.6px"></div>
<svg class="abs" style="left:1373.3px;top:556.6px" width="21.600" height="21.600" viewBox="0 0 20 20"><path d="M8 6v8l5.5-4z" fill="#c9c9c9"/></svg>
<div class="pg dis" style="left:1401.3px;top:556.6px"></div>
<svg class="abs" style="left:1401.3px;top:556.6px" width="21.600" height="21.600" viewBox="0 0 20 20"><rect x="12.4" y="6" width="1.6" height="8" fill="#c9c9c9"/><path d="M6.5 6v8L12 10z" fill="#c9c9c9"/></svg>
<div class="abs" style="left:557px;top:171px;width:160px;height:42px;background:#fff;box-shadow:0 1px 4px rgba(0,0,0,.35)"></div>
<div class="abs" style="left:557px;top:171px;width:160px;height:21px;background:#e95d1a;color:#fff;line-height:25px;padding-left:5px;font-size:12.5px;white-space:nowrap" id="dd1">Balance account (B)</div>
<div class="abs" style="left:557px;top:192px;width:160px;height:21px;color:#333;line-height:25px;padding-left:5px;font-size:12.5px;white-space:nowrap" id="dd2">Result account (R)</div>
</body></html>
